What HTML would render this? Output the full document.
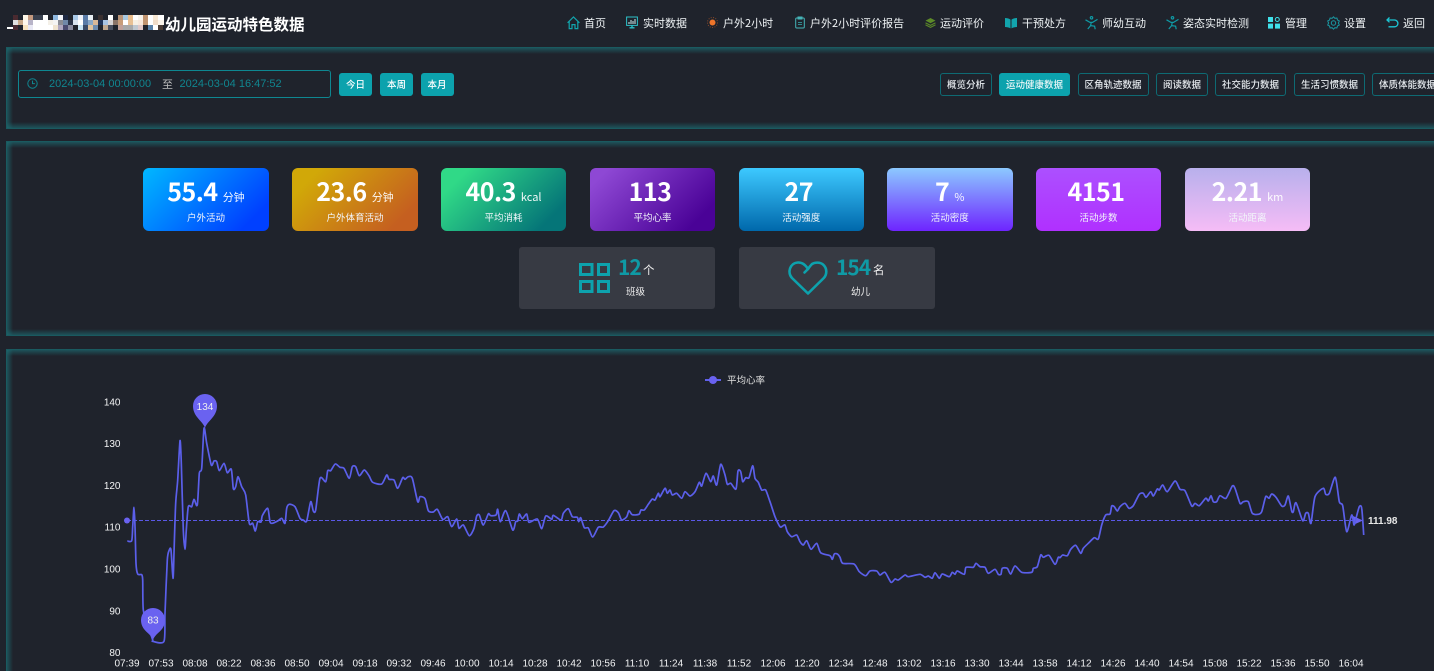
<!DOCTYPE html>
<html lang="zh"><head><meta charset="utf-8"><title>幼儿园运动特色数据</title>
<style>
*{box-sizing:border-box;margin:0;padding:0}
html,body{width:1434px;height:671px;overflow:hidden;background:#1f232c}
body{position:relative;font-family:"Liberation Sans","Noto Sans CJK SC",sans-serif;color:#fff}
#root{position:absolute;left:0;top:0;width:1434px;height:671px;overflow:hidden}
.a{position:absolute;white-space:nowrap}
.z{font-family:"Noto Sans CJK SC","Liberation Sans",sans-serif}
.title{left:165px;top:13px;font-size:15.5px;line-height:22px;font-weight:700;font-family:"Noto Sans CJK SC",sans-serif}
.n{top:15px;font-size:11px;line-height:16px;color:#eef2f4;font-family:"Noto Sans CJK SC",sans-serif}
.i{top:16px}
.panel{position:absolute;left:6px;width:1428px;border:1px solid #1a5a60;border-right:none;background:linear-gradient(to right,rgba(28,111,117,.62),rgba(28,111,117,0) 6px),linear-gradient(to bottom,rgba(28,111,117,.62),rgba(28,111,117,0) 6px),linear-gradient(to top,rgba(28,111,117,.62),rgba(28,111,117,0) 6px)}
.panel.last{border-bottom:none;background:linear-gradient(to right,rgba(28,111,117,.62),rgba(28,111,117,0) 6px),linear-gradient(to bottom,rgba(28,111,117,.62),rgba(28,111,117,0) 6px)}
.date{left:18px;top:70px;width:313px;height:28px;border:1px solid #0e8791;border-radius:3px}
.dt{top:77px;font-size:11px;line-height:14px;color:#108690}
.b{top:73px;height:23px;line-height:22px;text-align:center;background:#0ca2ad;border-radius:3px;font-size:9.5px;font-weight:500;width:33px;font-family:"Noto Sans CJK SC",sans-serif}
.t{top:72.5px;height:23.5px;line-height:21.5px;text-align:center;border:1px solid #0e6a73;border-radius:3px;font-size:9.5px;font-weight:500;color:#e6eaee;font-family:"Noto Sans CJK SC",sans-serif}
.t.on{background:#0ca2ad;border-color:#0ca2ad;color:#e9f6f7}
.c{top:168px;height:63px;width:126px;border-radius:6px;text-align:center;font-family:"Noto Sans CJK SC",sans-serif}
.v{position:absolute;left:0;right:0;top:5px;display:flex;justify-content:center;align-items:baseline;line-height:36px;font-size:25px;font-weight:700;letter-spacing:-.5px}
.v span{font-size:11px;font-weight:400;margin-left:5px;opacity:.95;letter-spacing:0}
.l{position:absolute;left:0;right:0;top:42px;font-size:9.5px;line-height:14px;color:#f2f6fa}
.g{top:247px;height:62px;width:196px;background:#373a43;border-radius:3px}
.num{top:252px;font-size:21px;line-height:30px;font-weight:700;letter-spacing:-1px;color:#0f9aa5;font-family:"Noto Sans CJK SC",sans-serif}
.u{top:261px;font-size:11.5px;line-height:18px;color:#f0f0f0;font-family:"Noto Sans CJK SC",sans-serif}
.s{top:284px;font-size:9.5px;line-height:14px;color:#eee;font-family:"Noto Sans CJK SC",sans-serif}
svg{position:absolute;overflow:visible}
</style></head><body><div id="root">

<svg style="left:0;top:0" width="180" height="36" shape-rendering="crispEdges">
<g>
<rect x="13" y="15" width="5" height="5" fill="#4a2a30"/><rect x="23" y="15" width="5" height="5" fill="#fff7e8"/><rect x="28" y="15" width="5" height="5" fill="#c49a80"/><rect x="33" y="15" width="5" height="5" fill="#39404e"/><rect x="38" y="15" width="5" height="5" fill="#39404e"/><rect x="43" y="15" width="5" height="5" fill="#fff"/><rect x="53" y="15" width="5" height="5" fill="#8fb8e0"/><rect x="58" y="15" width="5" height="5" fill="#f4f6fa"/><rect x="63" y="15" width="5" height="5" fill="#1f2a44"/><rect x="73" y="15" width="5" height="5" fill="#a8c8e8"/><rect x="78" y="15" width="5" height="5" fill="#eef2fa"/><rect x="83" y="15" width="5" height="5" fill="#5a7ca8"/><rect x="88" y="15" width="5" height="5" fill="#e8eef4"/><rect x="98" y="15" width="5" height="5" fill="#3a3030"/><rect x="108" y="15" width="5" height="5" fill="#fff"/><rect x="118" y="15" width="5" height="5" fill="#b89478"/><rect x="123" y="15" width="5" height="5" fill="#a8c8e0"/><rect x="128" y="15" width="5" height="5" fill="#e8bc8c"/><rect x="133" y="15" width="5" height="5" fill="#fff"/><rect x="138" y="15" width="5" height="5" fill="#f8f4ec"/><rect x="143" y="15" width="5" height="5" fill="#c09470"/><rect x="148" y="15" width="5" height="5" fill="#fff"/><rect x="153" y="15" width="5" height="5" fill="#f8e8d4"/><rect x="158" y="15" width="6" height="5" fill="#fff"/>
<rect x="13" y="20" width="5" height="5" fill="#e0e0e0"/><rect x="18" y="20" width="5" height="5" fill="#c8a888"/><rect x="23" y="20" width="5" height="5" fill="#fff8ec"/><rect x="28" y="20" width="5" height="5" fill="#b8b4c8"/><rect x="33" y="20" width="5" height="5" fill="#fff"/><rect x="38" y="20" width="5" height="5" fill="#fff"/><rect x="43" y="20" width="5" height="5" fill="#fff"/><rect x="48" y="20" width="5" height="5" fill="#f4f0e8"/><rect x="53" y="20" width="5" height="5" fill="#f4f4f4"/><rect x="58" y="20" width="5" height="5" fill="#8a8c94"/><rect x="63" y="20" width="5" height="5" fill="#7088a8"/><rect x="68" y="20" width="5" height="5" fill="#2a3448"/><rect x="73" y="20" width="5" height="5" fill="#d8e4f0"/><rect x="78" y="20" width="5" height="5" fill="#fff"/><rect x="83" y="20" width="5" height="5" fill="#5a7ca8"/><rect x="88" y="20" width="5" height="5" fill="#88a8c8"/><rect x="93" y="20" width="5" height="5" fill="#d8b898"/><rect x="98" y="20" width="5" height="5" fill="#1f3358"/><rect x="103" y="20" width="5" height="5" fill="#a8c4e4"/><rect x="108" y="20" width="5" height="5" fill="#d8d4d4"/><rect x="113" y="20" width="5" height="5" fill="#8a7468"/><rect x="118" y="20" width="5" height="5" fill="#c89c78"/><rect x="123" y="20" width="5" height="5" fill="#fff"/><rect x="128" y="20" width="5" height="5" fill="#e8c094"/><rect x="133" y="20" width="5" height="5" fill="#f8f0e4"/><rect x="138" y="20" width="5" height="5" fill="#f8e8dc"/><rect x="143" y="20" width="5" height="5" fill="#c09470"/><rect x="148" y="20" width="5" height="5" fill="#fff"/><rect x="153" y="20" width="5" height="5" fill="#f0dcc8"/><rect x="158" y="20" width="6" height="5" fill="#fbf4ea"/>
<rect x="13" y="25" width="5" height="5" fill="#4a2a30"/><rect x="23" y="25" width="5" height="5" fill="#f8e4c0"/><rect x="28" y="25" width="5" height="5" fill="#e8e8f4"/><rect x="33" y="25" width="5" height="5" fill="#fff"/><rect x="38" y="25" width="5" height="5" fill="#fff"/><rect x="43" y="25" width="5" height="5" fill="#fff"/><rect x="48" y="25" width="5" height="5" fill="#fff"/><rect x="53" y="25" width="5" height="5" fill="#f0e4d0"/><rect x="58" y="25" width="5" height="5" fill="#b0a8c0"/><rect x="63" y="25" width="5" height="5" fill="#4a4a70"/><rect x="68" y="25" width="5" height="5" fill="#8a8ca0"/><rect x="78" y="25" width="5" height="5" fill="#c8e4f4"/><rect x="83" y="25" width="5" height="5" fill="#3a4c68"/><rect x="88" y="25" width="5" height="5" fill="#e0c4a0"/><rect x="93" y="25" width="5" height="5" fill="#6c8cb0"/><rect x="103" y="25" width="5" height="5" fill="#c0a890"/><rect x="108" y="25" width="5" height="5" fill="#4a5060"/><rect x="118" y="25" width="5" height="5" fill="#c0a098"/><rect x="123" y="25" width="5" height="5" fill="#a8a8a8"/><rect x="128" y="25" width="5" height="5" fill="#a8a8a8"/><rect x="133" y="25" width="5" height="5" fill="#c0c8d0"/><rect x="138" y="25" width="5" height="5" fill="#e0c8c8"/><rect x="148" y="25" width="5" height="5" fill="#5880a8"/><rect x="153" y="25" width="5" height="5" fill="#fff"/><rect x="158" y="25" width="5" height="5" fill="#4a3c34"/>
<rect x="7" y="27" width="6" height="2" fill="#fff"/>
</g></svg>
<div class="a title">幼儿园运动特色数据</div>

<!-- nav -->
<svg class="i" style="left:567px" width="13" height="14" viewBox="0 0 13 14" fill="none" stroke="#12a5ad" stroke-width="1.2"><path d="M.6 6.8 6.5 1l5.9 5.8M2.2 5.5V12.6H5V8.6h3v4h2.8V5.5"/></svg>
<span class="a n" style="left:584px">首页</span>
<svg class="i" style="left:626px" width="12" height="13" viewBox="0 0 12 13" fill="none"><rect x=".6" y="1" width="10.8" height="8.4" stroke="#2cc0c8"/><path d="M3 8V6M5 8V4M7 8V5M9 8V3" stroke="#cfeff2"/><path d="M3.5 11.8h5M6 9.5v2" stroke="#2cc0c8" stroke-width="1.4"/></svg>
<span class="a n" style="left:643px">实时数据</span>
<svg class="i" style="left:707px" width="11" height="13" viewBox="0 0 11 13"><circle cx="5.5" cy="6.5" r="3" fill="#f0752a"/><circle cx="5.5" cy="6.5" r="5" fill="none" stroke="#8a4a2a" stroke-dasharray="1 1.4"/></svg>
<span class="a n" style="left:723px">户外2小时</span>
<svg class="i" style="left:795px" width="10" height="13" viewBox="0 0 10 13" fill="none" stroke="#45b4b8"><rect x=".7" y="2" width="8.6" height="10" rx="1"/><path d="M3 1h4v2H3z" fill="#45b4b8"/><path d="M3 6.5h4M3 8.5h4" stroke="#2f8c90"/></svg>
<span class="a n" style="left:810px">户外2小时评价报告</span>
<svg class="i" style="left:925px" width="11" height="13" viewBox="0 0 11 13" fill="#5c8a28"><path d="M5.5 2 10.5 4.6 5.5 7.2.5 4.6z"/><path d="M.8 6.4 5.5 8.8l4.7-2.4.6.8-5.3 2.8L.2 7.2zM.8 8.4l4.7 2.4 4.7-2.4.6.8-5.3 2.8-5.3-2.8z"/></svg>
<span class="a n" style="left:940px">运动评价</span>
<svg class="i" style="left:1005px" width="12" height="13" viewBox="0 0 12 13" fill="#12a5ad"><path d="M0 2c2 0 4 .4 5.5 1.6V12.4C4 11.4 2 11 0 11zM12 2c-2 0-4 .4-5.5 1.6V12.4C8 11.4 10 11 12 11z"/></svg>
<span class="a n" style="left:1022px">干预处方</span>
<svg class="i" style="left:1085px" width="13" height="14" viewBox="0 0 13 14" fill="none" stroke="#0f9aa5" stroke-width="1.2"><circle cx="6.5" cy="1.8" r="1.2"/><path d="M.5 3.8 5 6.4h2.5l5-3M6.2 6.6 5.6 9.6 2.8 13M5.6 9.6l4 .6.6 3"/></svg>
<span class="a n" style="left:1102px">师幼互动</span>
<svg class="i" style="left:1166px" width="13" height="14" viewBox="0 0 13 14" fill="none" stroke="#0f9aa5" stroke-width="1.2"><circle cx="6.5" cy="1.8" r="1.2"/><path d="M.5 3.8 5 6.4h2.5l5-3M6.2 6.6 5.6 9.6 2.8 13M5.6 9.6l4 .6.6 3"/></svg>
<span class="a n" style="left:1183px">姿态实时检测</span>
<svg class="i" style="left:1268px" width="12" height="13" viewBox="0 0 12 13"><rect x="0" y="1" width="5" height="5" fill="#3fe0ea"/><circle cx="9.3" cy="3.5" r="2" fill="none" stroke="#3fe0ea"/><rect x="0" y="7.6" width="5" height="5" fill="#3fe0ea"/><rect x="7" y="7.6" width="5" height="5" fill="#3fe0ea"/></svg>
<span class="a n" style="left:1285px">管理</span>
<svg class="i" style="left:1327px" width="13" height="14" viewBox="0 0 13 14" fill="none" stroke="#1a9aa4"><circle cx="6.5" cy="7" r="2.2"/><path d="M6.5.8l1.4 1.5 2-.3.6 2 1.8 1-.9 2 .9 2-1.8 1-.6 2-2-.3-1.4 1.5-1.4-1.5-2 .3-.6-2-1.8-1 .9-2-.9-2 1.8-1 .6-2 2 .3z"/></svg>
<span class="a n" style="left:1344px">设置</span>
<svg class="i" style="left:1386px" width="13" height="13" viewBox="0 0 13 13" fill="none" stroke="#1cc6d4" stroke-width="1.3"><path d="M3.5 1.5 1 4l2.5 2.3M1 4h7.5a3.3 3.3 0 0 1 0 6.8H2.5"/></svg>
<span class="a n" style="left:1403px">返回</span>

<!-- panels -->
<div class="panel" style="top:47px;height:82px"></div>
<div class="panel" style="top:141px;height:195px"></div>
<div class="panel last" style="top:349px;height:322px"></div>

<!-- date -->
<div class="a date"></div>
<svg style="left:27px;top:78px" width="11" height="11" viewBox="0 0 11 11" fill="none" stroke="#108690"><circle cx="5.5" cy="5.5" r="4.7"/><path d="M5.5 2.6v3h2.4"/></svg>
<span class="a dt" style="left:49px">2024-03-04 00:00:00</span>
<span class="a dt z" style="left:162px;color:#bdbdbd">至</span>
<span class="a dt" style="left:179.5px">2024-03-04 16:47:52</span>
<div class="a b" style="left:339px">今日</div>
<div class="a b" style="left:380px">本周</div>
<div class="a b" style="left:420.5px">本月</div>

<div class="a t" style="left:940px;width:52px">概览分析</div>
<div class="a t on" style="left:999px;width:71px">运动健康数据</div>
<div class="a t" style="left:1077.5px;width:71px">区角轨迹数据</div>
<div class="a t" style="left:1156px;width:52px">阅读数据</div>
<div class="a t" style="left:1215px;width:71px">社交能力数据</div>
<div class="a t" style="left:1294px;width:71px">生活习惯数据</div>
<div class="a t" style="left:1372px;width:62px;border-right:none;border-radius:3px 0 0 3px;overflow:hidden;text-align:left;padding-left:6px">体质体能数据</div>

<!-- cards -->
<div class="a c" style="left:143px;background:linear-gradient(135deg,#00b8ff,#0040ff 85%)"><div class="v">55.4<span>分钟</span></div><div class="l">户外活动</div></div>
<div class="a c" style="left:292px;background:linear-gradient(135deg,#d1a808 15%,#c55f20 85%)"><div class="v">23.6<span>分钟</span></div><div class="l">户外体育活动</div></div>
<div class="a c" style="left:441px;width:125px;background:linear-gradient(135deg,#30d987 15%,#057578 85%)"><div class="v">40.3<span>kcal</span></div><div class="l">平均消耗</div></div>
<div class="a c" style="left:590px;width:125px;background:linear-gradient(135deg,#8e48d4 10%,#4a0297 85%)"><div class="v">113<span></span></div><div class="l">平均心率</div></div>
<div class="a c" style="left:738.5px;width:125.5px;background:linear-gradient(180deg,#3dc9ff,#0068ab)"><div class="v">27<span></span></div><div class="l">活动强度</div></div>
<div class="a c" style="left:887px;width:125.5px;background:linear-gradient(180deg,#8cc9ff,#6e24ff)"><div class="v">7<span>%</span></div><div class="l">活动密度</div></div>
<div class="a c" style="left:1036px;width:125px;background:linear-gradient(180deg,#ac50ff,#b030ff)"><div class="v">4151<span></span></div><div class="l">活动步数</div></div>
<div class="a c" style="left:1185px;width:125px;background:linear-gradient(180deg,#b8b0ec,#f5bcf6)"><div class="v">2.21<span>km</span></div><div class="l">活动距离</div></div>

<div class="a g" style="left:519px"></div>
<div class="a g" style="left:738.5px"></div>
<svg style="left:579px;top:263px" width="31" height="30" viewBox="0 0 31 30" fill="none" stroke="#0da2ad" stroke-width="3"><rect x="1.5" y="1.5" width="11.5" height="10"/><rect x="19.5" y="1.5" width="10" height="10"/><rect x="1.5" y="18.5" width="11.5" height="10"/><rect x="19.5" y="18.5" width="10" height="10"/></svg>
<span class="a num" style="left:618px">12</span>
<span class="a u" style="left:643px">个</span>
<span class="a s" style="left:626px">班级</span>
<svg style="left:788px;top:261px" width="40" height="34" viewBox="0 0 40 34" fill="none" stroke="#0da2ad" stroke-width="2.6" stroke-linejoin="round" stroke-linecap="round"><path d="M20 32.5 4 17C-1 11.5 1.8 2 10 1.5c4-.2 7 1.5 10 6.5 2-3 3.5-4.5 4-5 3-1.8 8-2 11 .5 4.5 3.8 4 10 .8 13.5z"/><path d="M20 8 16.5 11.5"/></svg>
<span class="a num" style="left:836px">154</span>
<span class="a u" style="left:873px">名</span>
<span class="a s" style="left:851px">幼儿</span>

<!-- chart -->
<svg style="left:0;top:0" width="1434" height="671" viewBox="0 0 1434 671">
<g font-family="&quot;Liberation Sans&quot;,sans-serif" font-size="10" fill="#f2f3f4">
<g text-anchor="end"><text x="120.5" y="405.5">140</text><text x="120.5" y="447">130</text><text x="120.5" y="489">120</text><text x="120.5" y="530.5">110</text><text x="120.5" y="572.5">100</text><text x="120.5" y="614.5">90</text><text x="120.5" y="656">80</text></g>
<g text-anchor="middle">
<text x="127" y="666.5">07:39</text><text x="161" y="666.5">07:53</text><text x="195" y="666.5">08:08</text><text x="229" y="666.5">08:22</text><text x="263" y="666.5">08:36</text><text x="297" y="666.5">08:50</text><text x="331" y="666.5">09:04</text><text x="365" y="666.5">09:18</text><text x="399" y="666.5">09:32</text><text x="433" y="666.5">09:46</text><text x="467" y="666.5">10:00</text><text x="501" y="666.5">10:14</text><text x="535" y="666.5">10:28</text><text x="569" y="666.5">10:42</text><text x="603" y="666.5">10:56</text><text x="637" y="666.5">11:10</text><text x="671" y="666.5">11:24</text><text x="705" y="666.5">11:38</text><text x="739" y="666.5">11:52</text><text x="773" y="666.5">12:06</text><text x="807" y="666.5">12:20</text><text x="841" y="666.5">12:34</text><text x="875" y="666.5">12:48</text><text x="909" y="666.5">13:02</text><text x="943" y="666.5">13:16</text><text x="977" y="666.5">13:30</text><text x="1011" y="666.5">13:44</text><text x="1045" y="666.5">13:58</text><text x="1079" y="666.5">14:12</text><text x="1113" y="666.5">14:26</text><text x="1147" y="666.5">14:40</text><text x="1181" y="666.5">14:54</text><text x="1215" y="666.5">15:08</text><text x="1249" y="666.5">15:22</text><text x="1283" y="666.5">15:36</text><text x="1317" y="666.5">15:50</text><text x="1351" y="666.5">16:04</text>
</g></g>
<path d="M705 380h16" stroke="#5f60ea" stroke-width="2"/><circle cx="713" cy="380" r="4" fill="#6a62f0"/>
<text x="727" y="383.5" font-size="9.5" fill="#e0e0e0" font-family="&quot;Noto Sans CJK SC&quot;,sans-serif">平均心率</text>
<path d="M127 520.5H1358" stroke="#5a58e6" stroke-width="1" stroke-dasharray="4 2" fill="none"/>
<circle cx="127" cy="520.5" r="3" fill="#6a62f0"/>
<path d="M1353 516l10 4.5-10 4.5z" fill="#6a62f0"/>
<polyline id="ln" fill="none" stroke="#5b5fea" stroke-width="1.7" stroke-linejoin="round" points="127.3,541 131.7,540.7 132.7,526.7 134,507.3 135,526.7 136,563.3 137.7,574 141.7,574.7 142.7,580 143.3,610 148.3,626.7 152.7,640 152.7,641.3 164,641.3 165,613.3 167.3,560 169.3,550 171,550 173,578.3 174,553 175.7,503 177.7,480 180,440.7 181.3,463 183.3,530 185,549.3 186.3,530 188.3,506.7 191.7,506.7 194,499.3 197.3,505 199.3,473.3 201.7,468.3 204,428.3 206.7,443.3 211.3,465 214,461 216.7,461.7 219.3,470.7 224,463.3 227.3,472.7 231.3,469.3 233.3,488.7 235.7,486.7 238,476.7 241.7,486.7 245.7,495 249.3,523.3 252.7,523.3 255.3,531 257.7,521.7 261,522 262.3,515.7 267.7,508.3 270,521.7 272.3,523.3 277.7,521 281.7,518.3 285,523.3 286.7,508.3 289.3,504.3 295,506.7 300,518.3 303.3,520 306.7,521 310.7,501.7 313.3,511 315.7,510 320,478.3 325.7,481.7 327.7,470.7 330.7,470.7 335.3,464 340,467.3 344,468.3 349.3,478.3 352.3,466.7 355.7,466.7 359.3,475.7 364.3,470 369,475.7 372.7,482.3 381.7,484 386.7,475 389,479.3 394,480 397.7,488.3 402.7,477.7 405,479.3 408.3,476.7 412.3,478.3 417.7,501.7 420,496.7 425,498.7 428.3,510.7 433.3,512 437.3,509.3 442.7,519.3 447.7,516.7 451.7,526.7 456.7,519 459,528.3 463.3,525 469.3,535.7 474,528.3 476.7,516 479.3,515 483.3,525 488.3,514 490.7,515.7 496,515 497.7,509.3 500.3,521.7 505.7,510.7 512.7,530 515.7,521.7 517.7,521 519.3,514 522.3,518.7 526.7,514 529,522.3 537.3,519 541.7,528.7 545.7,516 551.7,519.3 553.3,515.3 561,520 563.3,513.3 568.3,508.7 572.3,516.7 577.3,517.3 578.7,521.7 580.7,517.7 584.3,527.7 588.3,528 592.7,537 598.3,527.3 603.3,527 608.3,520.7 614,510.7 618.3,512.7 621.7,520 626.7,516.7 629,510.7 632.3,514.7 639,514.3 641,510 644.3,510 648.3,504.3 652.3,499 655,500 658.3,493.3 660,496.7 665,488.3 667.3,493.3 670,490 672.3,495 676.7,493.3 681.7,498.3 685,491.7 690,496 695,491.7 699.3,482.3 701.7,486 706,473.3 710.7,481.7 713.3,476 716.7,485 720.7,464.3 725,475 727.3,484.3 730.7,483.3 736,489 738,471 740.7,471.7 742.7,481.7 745.7,477.7 749,477.7 752.7,465.7 755,478.3 758.3,482.3 761.7,490 765.7,490 770,501.7 775,516.7 780,526.7 782.7,526 785,525 787.3,531.7 791.7,536.7 796.7,535 800,541.7 803.3,545 806.7,540.7 811,549.3 816.7,543.3 820.7,552.7 830,555.7 832.3,559.3 834.3,554 837.3,554 840,557.3 842.7,563.3 854,564 859.3,571.7 865.7,575.7 870,571 876.7,571 880,575 885,572.3 891,582.3 895,579 898.3,580 905,575 908.3,576.7 920,574.3 925,577.3 928.3,576 932.3,578.3 935,572.7 939.3,578.3 942.3,574 949.3,576.7 952.3,572.3 955,574.3 957.3,571 964.3,574.3 966,567.3 973.3,567.3 976,563.3 980,566.7 985,567.3 988.3,573.3 995,569.3 998.3,574.3 1001,574.3 1002.3,568.3 1007.3,568.3 1010.7,574 1015,566 1021.7,572.3 1031.7,572.3 1033.3,568.3 1037.3,566.7 1040.7,555 1043.3,557.3 1049,555.3 1055,564.3 1058.3,557.3 1060,557.7 1062.7,555 1067.3,555.7 1070.7,549.3 1075.7,545.3 1080.7,553.3 1083.3,548.3 1088.3,543.3 1094.3,537.7 1098.3,539 1101.7,525 1105.7,515 1110,514 1111.7,506 1114.3,506.7 1117.3,511 1120,506.7 1125,503.3 1129,508.3 1133.3,505.7 1139.3,494.3 1143.3,493.3 1146,497.3 1150.7,491.7 1153.3,496 1157.3,489 1159.3,490 1162.7,485 1167.3,491.7 1175,481 1180,489.3 1185,490.7 1191.7,506 1195,503.3 1199.3,505.7 1205.7,498.3 1208.3,501 1211,495.7 1213.3,501.7 1216.7,501.7 1220,495.7 1226,498.3 1232.3,486 1235,488.3 1240,503.3 1243.3,501.7 1248.3,501.7 1252.3,513.3 1258.3,514.3 1261.7,511.7 1265.7,496.7 1269,498.3 1271.7,494 1276,497.3 1281.7,506 1285,505 1288.3,496 1291.7,511 1293.3,511.7 1296,502.7 1302.7,520.7 1305.7,513.3 1308.3,513.3 1311,523.3 1315,496.7 1323.3,488.3 1325.7,494.3 1329.3,493.3 1335.3,477.3 1339.3,501.7 1342.7,505.7 1346.7,531.7 1351.7,515 1354,525 1356,518.3 1359.3,506.7 1361.7,508.3 1363.7,535"/>
<path d="M205 428c-2-7-12-11-12-22a12 12 0 0 1 24 0c0 11-10 15-12 22z" fill="#6a62f0"/>
<text x="205" y="410" text-anchor="middle" font-size="10" fill="#eee" font-family="&quot;Liberation Sans&quot;,sans-serif">134</text>
<path d="M153 640c-2-7-12-9-12-20a12 12 0 0 1 24 0c0 11-10 13-12 20z" fill="#6a62f0"/>
<text x="153" y="623.5" text-anchor="middle" font-size="10" fill="#eee" font-family="&quot;Liberation Sans&quot;,sans-serif">83</text>
<text x="1368" y="524" font-size="10" font-weight="700" fill="#e8e8e8" font-family="&quot;Liberation Sans&quot;,sans-serif">111.98</text>
</svg>
<script>
(function(){var e=document.getElementById('ln'),p=e.getAttribute('points').trim().split(/\s+/).map(function(s){return s.split(',').map(Number)}),d='M'+p[0],k=1/8;
for(var i=0;i<p.length-1;i++){var a=p[i-1]||p[i],b=p[i],c=p[i+1],f=p[i+2]||c;
d+='C'+(b[0]+(c[0]-a[0])*k).toFixed(1)+' '+(b[1]+(c[1]-a[1])*k).toFixed(1)+' '+(c[0]-(f[0]-b[0])*k).toFixed(1)+' '+(c[1]-(f[1]-b[1])*k).toFixed(1)+' '+c[0]+' '+c[1];}
var n=document.createElementNS('http://www.w3.org/2000/svg','path');n.setAttribute('d',d);n.setAttribute('fill','none');n.setAttribute('stroke','#5b5fea');n.setAttribute('stroke-width','1.7');n.setAttribute('stroke-linejoin','round');e.parentNode.replaceChild(n,e);})();
</script>
</div></body></html>
